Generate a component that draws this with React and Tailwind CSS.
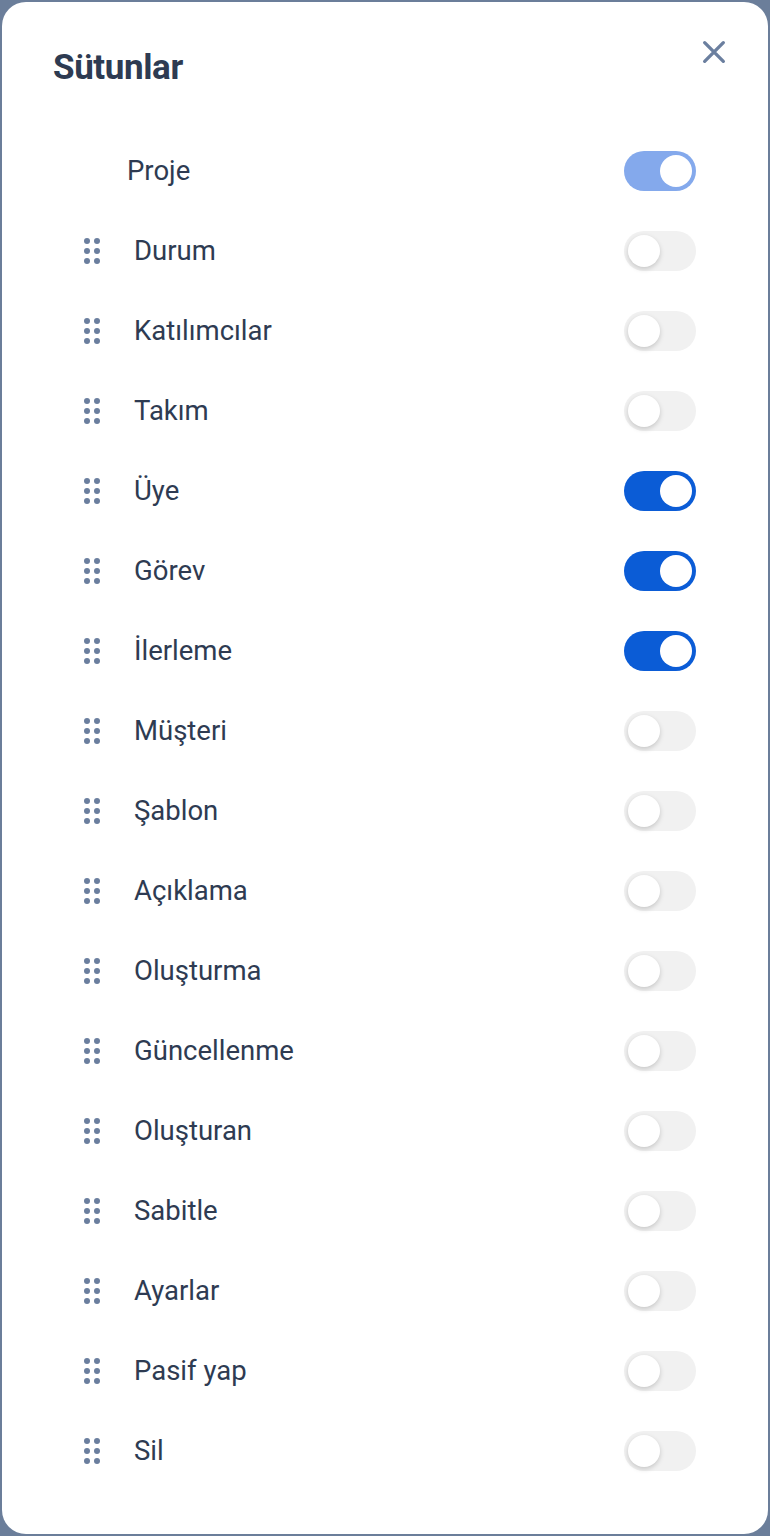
import React, { useState } from 'react';

const initialColumns = [
  { name: 'Proje', on: true, locked: true },
  { name: 'Durum', on: false },
  { name: 'Katılımcılar', on: false },
  { name: 'Takım', on: false },
  { name: 'Üye', on: true },
  { name: 'Görev', on: true },
  { name: 'İlerleme', on: true },
  { name: 'Müşteri', on: false },
  { name: 'Şablon', on: false },
  { name: 'Açıklama', on: false },
  { name: 'Oluşturma', on: false },
  { name: 'Güncellenme', on: false },
  { name: 'Oluşturan', on: false },
  { name: 'Sabitle', on: false },
  { name: 'Ayarlar', on: false },
  { name: 'Pasif yap', on: false },
  { name: 'Sil', on: false },
];

const DragHandle = () => (
  <div className="grid grid-cols-2 gap-x-[4px] gap-y-[4px] w-[16px]">
    {[0, 1, 2, 3, 4, 5].map(i => (
      <span key={i} className="w-[6px] h-[6px] rounded-full bg-[#6a7e9e]" />
    ))}
  </div>
);

const Toggle = ({ on, locked, onClick }) => {
  let track = 'bg-[#f1f1f1]';
  if (on) track = locked ? 'bg-[#84a9ec]' : 'bg-[#0b5cd6]';
  return (
    <button
      onClick={onClick}
      className={`relative w-[72px] h-[40px] rounded-full ${track} flex items-center px-[4px] ${on ? 'justify-end' : 'justify-start'}`}
    >
      <span className={`w-[32px] h-[32px] rounded-full bg-white ${on ? '' : 'shadow-[0_2px_5px_rgba(0,0,0,0.18)]'}`} />
    </button>
  );
};

export default function App() {
  const [columns, setColumns] = useState(initialColumns);

  const toggle = (idx) => {
    setColumns(columns.map((c, i) => (i === idx && !c.locked ? { ...c, on: !c.on } : c)));
  };

  return (
    <div className="h-[1536px] bg-[#6b7e9a] p-[2px]" style={{ fontFamily: 'Roboto, "Noto Sans", sans-serif' }}>
      <div className="h-full bg-white rounded-[24px] flex flex-col">
        <div className="flex justify-between items-start pt-[28px] pl-[51px] pr-[32px]">
          <h1 className="mt-[18px] text-[35px] leading-[40px] font-bold text-[#2e3b52] tracking-[-0.4px]">Sütunlar</h1>
          <button className="w-[44px] h-[44px] flex items-center justify-center text-[#6b7f9f]">
            <svg width="32" height="32" viewBox="0 0 24 24" fill="none" stroke="currentColor" strokeWidth="2.5" strokeLinecap="round">
              <path d="M5 5l14 14M19 5L5 19" />
            </svg>
          </button>
        </div>

        <div className="mt-[43px] pl-[82px] pr-[72px]">
          {columns.map((col, i) => (
            <div key={col.name} className="h-[80px] flex items-center justify-between">
              <div className="flex items-center">
                {col.locked ? (
                  <span className="ml-[43px] text-[27.5px] text-[#2e3b52]">{col.name}</span>
                ) : (
                  <>
                    <DragHandle />
                    <span className="ml-[34px] text-[27.5px] text-[#2e3b52]">{col.name}</span>
                  </>
                )}
              </div>
              <Toggle on={col.on} locked={col.locked} onClick={() => toggle(i)} />
            </div>
          ))}
        </div>
      </div>
    </div>
  );
}
